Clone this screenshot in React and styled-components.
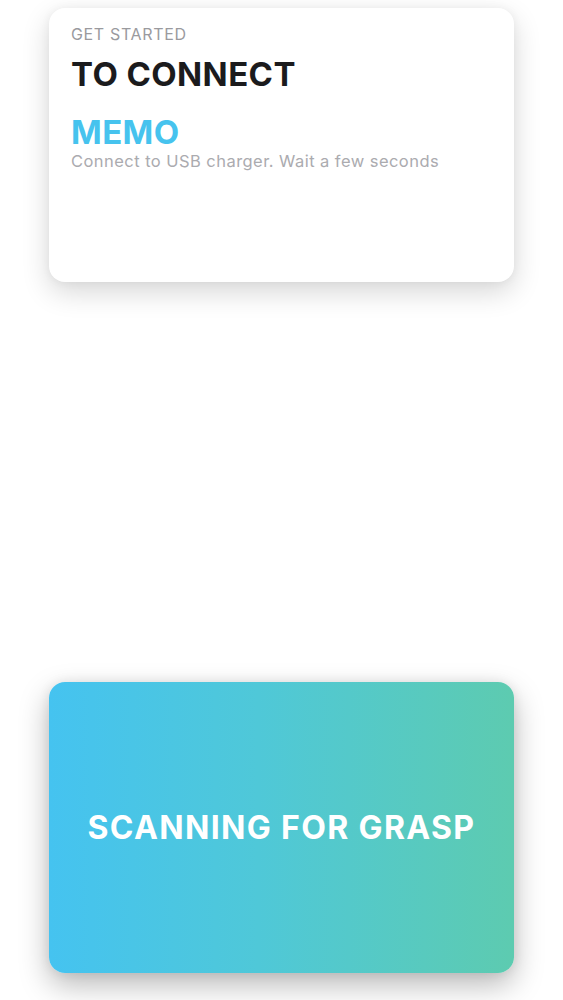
import React from "react";
import styled, { createGlobalStyle } from "styled-components";

const Global = createGlobalStyle`
  html, body { margin: 0; padding: 0; background: #ffffff; }
  body { font-family: Inter, "Noto Sans", "Liberation Sans", sans-serif; -webkit-font-smoothing: antialiased; }
`;

const Page = styled.div`
  width: 563px;
  min-height: 1000px;
  display: flex;
  flex-direction: column;
  align-items: center;
  padding-top: 8px;
  box-sizing: border-box;
  gap: 400px;
`;

const InfoCard = styled.div`
  width: 465px;
  height: 274px;
  box-sizing: border-box;
  background: #ffffff;
  border-radius: 16px;
  box-shadow: 0 10px 28px rgba(0, 0, 0, 0.16), 0 0 10px rgba(0, 0, 0, 0.05);
  padding: 16px 22px;
  display: flex;
  flex-direction: column;
`;

const Eyebrow = styled.div`
  font-size: 16px;
  color: #9a9a9e;
  letter-spacing: 0.65px;
  line-height: 20px;
`;

const Title = styled.div`
  margin-top: 12px;
  font-size: 33px;
  font-weight: 700;
  color: #1b1b1d;
  line-height: 36px;
  letter-spacing: 0.4px;
`;

const Highlight = styled.div`
  margin-top: 22px;
  font-size: 33px;
  font-weight: 700;
  color: ${(p) => p.$color};
  line-height: 36px;
  letter-spacing: 0.4px;
`;

const Note = styled.div`
  margin-top: 1px;
  font-size: 16.5px;
  color: #ababaf;
  line-height: 20px;
  letter-spacing: 0.45px;
`;

const ActionCard = styled.div`
  width: 465px;
  height: 291px;
  border-radius: 16px;
  background: linear-gradient(90deg, #45c3f0 0%, #4fc8d8 45%, #5dcbb0 100%);
  box-shadow: 0 12px 30px rgba(0, 0, 0, 0.28), 0 0 12px rgba(0, 0, 0, 0.08);
  display: flex;
  align-items: center;
  justify-content: center;
`;

const ActionLabel = styled.div`
  color: #ffffff;
  font-size: 32px;
  font-weight: 700;
  letter-spacing: 1.35px;
`;

export default function App() {
  return (
    <>
      <Global />
      <Page>
        <InfoCard>
          <Eyebrow>GET STARTED</Eyebrow>
          <Title>TO CONNECT</Title>
          <Highlight $color="#46c3ee">MEMO</Highlight>
          <Note>Connect to USB charger. Wait a few seconds</Note>
        </InfoCard>
        <ActionCard>
          <ActionLabel>SCANNING FOR GRASP</ActionLabel>
        </ActionCard>
      </Page>
    </>
  );
}
